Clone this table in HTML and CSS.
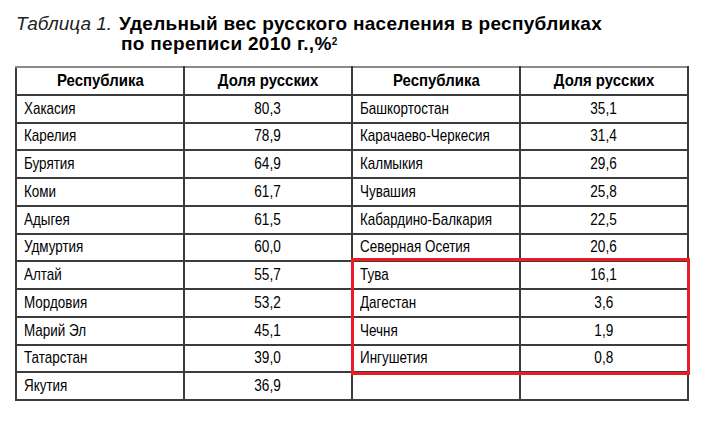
FILE: index.html
```html
<!DOCTYPE html>
<html lang="ru">
<head>
<meta charset="utf-8">
<title>Таблица 1</title>
<link rel="stylesheet" href="styles.css">
</head>
<body>
<div class="page">
  <div class="caption">
    <span class="label">Таблица 1.</span>
    <div class="heading">
      <div>Удельный вес русского населения в республиках</div>
      <div>по переписи 2010 г.,%<sup>2</sup></div>
    </div>
  </div>
  <div class="table-wrap">
    <table class="data">
      <colgroup><col class="c"><col class="c"><col class="c"><col class="c"></colgroup>
      <thead>
        <tr><th><span class="t">Республика</span></th><th><span class="t">Доля русских</span></th><th><span class="t">Республика</span></th><th><span class="t">Доля русских</span></th></tr>
      </thead>
      <tbody>
        <tr><td><span class="t">Хакасия</span></td><td class="num"><span class="t">80,3</span></td><td><span class="t">Башкортостан</span></td><td class="num"><span class="t">35,1</span></td></tr>
        <tr><td><span class="t">Карелия</span></td><td class="num"><span class="t">78,9</span></td><td><span class="t">Карачаево-Черкесия</span></td><td class="num"><span class="t">31,4</span></td></tr>
        <tr><td><span class="t">Бурятия</span></td><td class="num"><span class="t">64,9</span></td><td><span class="t">Калмыкия</span></td><td class="num"><span class="t">29,6</span></td></tr>
        <tr><td><span class="t">Коми</span></td><td class="num"><span class="t">61,7</span></td><td><span class="t">Чувашия</span></td><td class="num"><span class="t">25,8</span></td></tr>
        <tr><td><span class="t">Адыгея</span></td><td class="num"><span class="t">61,5</span></td><td><span class="t">Кабардино-Балкария</span></td><td class="num"><span class="t">22,5</span></td></tr>
        <tr><td><span class="t">Удмуртия</span></td><td class="num"><span class="t">60,0</span></td><td><span class="t">Северная Осетия</span></td><td class="num"><span class="t">20,6</span></td></tr>
        <tr><td><span class="t">Алтай</span></td><td class="num"><span class="t">55,7</span></td><td><span class="t">Тува</span></td><td class="num"><span class="t">16,1</span></td></tr>
        <tr><td><span class="t">Мордовия</span></td><td class="num"><span class="t">53,2</span></td><td><span class="t">Дагестан</span></td><td class="num"><span class="t">3,6</span></td></tr>
        <tr><td><span class="t">Марий Эл</span></td><td class="num"><span class="t">45,1</span></td><td><span class="t">Чечня</span></td><td class="num"><span class="t">1,9</span></td></tr>
        <tr><td><span class="t">Татарстан</span></td><td class="num"><span class="t">39,0</span></td><td><span class="t">Ингушетия</span></td><td class="num"><span class="t">0,8</span></td></tr>
        <tr><td><span class="t">Якутия</span></td><td class="num"><span class="t">36,9</span></td><td></td><td class="num"></td></tr>
      </tbody>
    </table>
    <div class="highlight"></div>
  </div>
</div>
</body>
</html>
```
FILE: styles.css
```css
html, body {
  margin: 0;
  padding: 0;
  background: #ffffff;
}
.page {
  padding: 14px 0 0 15px;
  width: 674px;
  font-family: "Liberation Sans", Arial, sans-serif;
  color: #000;
}
.caption {
  display: flex;
  gap: 7px;
  font-size: 19px;
  line-height: 20px;
  padding-left: 1px;
}
.label {
  font-style: italic;
  font-weight: 300;
  color: #222;
}
.heading {
  font-weight: bold;
  letter-spacing: 0.3px;
  color: #000;
}
.heading div + div {
  padding-left: 2px;
}
.heading sup {
  font-size: 10px;
  line-height: 0;
  vertical-align: 5px;
}
.table-wrap {
  position: relative;
  margin-top: 12px;
}
.data {
  border-collapse: collapse;
  table-layout: fixed;
  width: 674px;
  font-family: "Liberation Sans", Arial, sans-serif;
  font-size: 17px;
  color: #000;
}
.data col.c {
  width: 168px;
}
.data tr {
  height: 27.75px;
}
.data th, .data td {
  border: 2px solid #3c3c3c;
  padding: 0 7px;
  line-height: 20px;
  white-space: nowrap;
  overflow: visible;
}
.data .t {
  display: inline-block;
  transform: scaleX(0.79);
  transform-origin: left center;
}
.data thead th {
  border-top-color: #8a8a8a;
  font-weight: bold;
  text-align: center;
}
.data thead .t {
  transform: scaleX(0.88);
  transform-origin: center center;
}
.data td {
  text-align: left;
}
.data td.num {
  text-align: center;
}
.data td.num .t {
  transform: scaleX(0.8);
  transform-origin: center center;
}
.highlight {
  position: absolute;
  left: 336px;
  top: 192px;
  width: 333px;
  height: 111px;
  border: 3px solid #ec1c24;
}
```
